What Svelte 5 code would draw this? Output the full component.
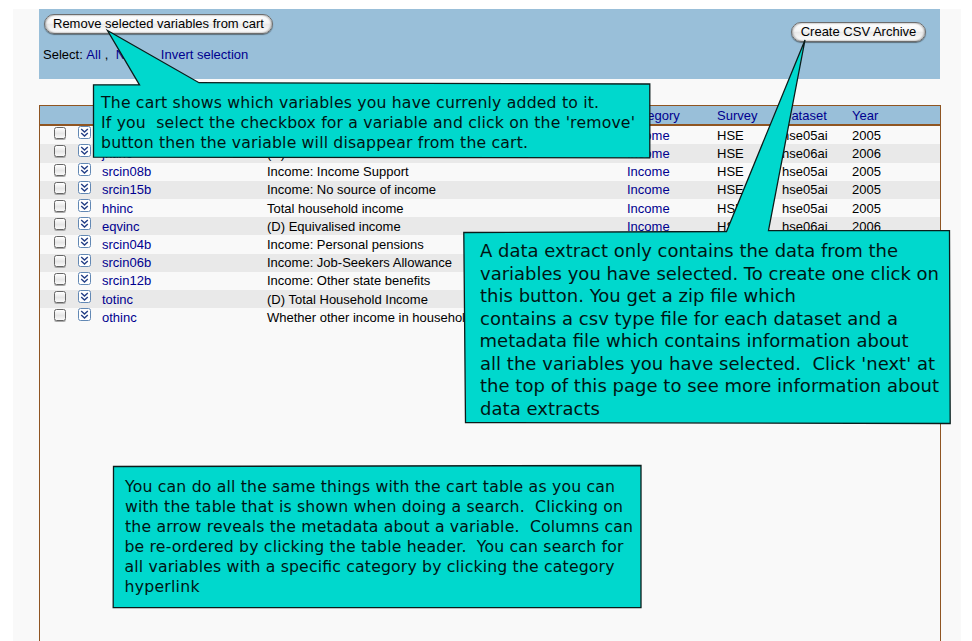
<script>
  const rows = [
    ['', '', 'Income', 'HSE', 'hse05ai', '2005'],
    ['jntinc', '(D) Joint income', 'Income', 'HSE', 'hse06ai', '2006'],
    ['srcin08b', 'Income: Income Support', 'Income', 'HSE', 'hse05ai', '2005'],
    ['srcin15b', 'Income: No source of income', 'Income', 'HSE', 'hse05ai', '2005'],
    ['hhinc', 'Total household income', 'Income', 'HSE', 'hse05ai', '2005'],
    ['eqvinc', '(D) Equivalised income', 'Income', 'HSE', 'hse06ai', '2006'],
    ['srcin04b', 'Income: Personal pensions'],
    ['srcin06b', 'Income: Job-Seekers Allowance'],
    ['srcin12b', 'Income: Other state benefits'],
    ['totinc', '(D) Total Household Income'],
    ['othinc', 'Whether other income in household']
  ];

  // Each line: text, x, baseline, width
  const callouts = [
    {
      size: 15.7,
      shape: '107.5,30.5 199,82.7 649.8,84 649.8,157.8 93.5,157.2 93.5,84.8 139.5,84.8',
      lines: [
        ['The cart shows which variables you have currenly added to it.', 101, 108, 498],
        ['If you  select the checkbox for a variable and click on the \'remove\'', 101, 128, 534],
        ['button then the variable will disappear from the cart.', 101, 148, 427]
      ]
    },
    {
      size: 18,
      shape: '805,40 768.5,230.5 949.5,230.7 950.2,423.5 465.5,422.5 463.8,232.5 726.5,231.5',
      lines: [
        ['A data extract only contains the data from the', 480, 257, 418],
        ['variables you have selected. To create one click on', 480, 280, 459],
        ['this button. You get a zip file which', 480, 302, 316],
        ['contains a csv type file for each dataset and a', 480, 325, 418],
        ['metadata file which contains information about', 479.5, 347, 429],
        ['all the variables you have selected.  Click \'next\' at', 480, 370, 455],
        ['the top of this page to see more information about', 480, 392, 459],
        ['data extracts', 480, 415, 120]
      ]
    },
    {
      size: 15.7,
      shape: '113.5,466.5 641,465.5 641,607.7 113.2,607.7',
      lines: [
        ['You can do all the same things with the cart table as you can', 125, 492, 490],
        ['with the table that is shown when doing a search.  Clicking on', 125, 512, 498],
        ['the arrow reveals the metadata about a variable.  Columns can', 125, 532, 508],
        ['be re-ordered by clicking the table header.  You can search for', 124.5, 552, 499],
        ['all variables with a specific category by clicking the category', 124.5, 572, 490],
        ['hyperlink', 124.5, 592, 75]
      ]
    }
  ];
</script>

<div class="page">
  <div class="panel">
    <header>
      <div class="left">
        <button>Remove selected variables from cart</button>
        <p class="select">Select: <a href="#all">All</a><span class="c1">,</span><a class="none" href="#none">None</a><span class="c2">,</span><a href="#invert">Invert selection</a></p>
      </div>
      <button class="csv">Create CSV Archive</button>
    </header>

    <section class="table">
      <div class="head grid">
        <span></span><span></span><span></span><span></span><a href="#c">Category</a><a href="#s">Survey</a><a href="#ds">Dataset</a><a href="#y">Year</a>
      </div>
      {#each rows as [name, label, category, survey, dataset, year]}
        <div class="row grid">
          <i class="check"></i>
          <svg class="arrow" width="13" height="14" viewBox="0 0 13 14">
            <rect x=".5" y=".5" width="12" height="12" rx="2" fill="#fff" stroke="#6288b4" />
            <path d="M3.2 3 6.5 6 9.8 3M3.2 7 6.5 10 9.8 7" fill="none" stroke="#243f86" stroke-width="1.4" />
          </svg>
          <a href="#v">{name}</a><span>{label}</span>
          {#if category}
            <a href="#income">{category}</a><span>{survey}</span><span>{dataset}</span><span>{year}</span>
          {/if}
        </div>
      {/each}
    </section>
  </div>

  <svg class="notes" width="972" height="641" viewBox="0 0 972 641">
    {#each callouts as c}
      <polygon points={c.shape} fill="#00d8cd" stroke="#0b1c1b" stroke-width="1.3" />
      {#each c.lines as [text, x, y, w]}
        <text {x} {y} font-size={c.size} textLength={w}>{text}</text>
      {/each}
    {/each}
  </svg>
</div>

<style>
  :global(body) { background: #fff; overflow: hidden; }
  .page {
    position: relative;
    box-sizing: border-box;
    width: 972px;
    height: 641px;
    padding: 9px 11px 0 13px;
    overflow: hidden;
    font: 13px/18px "Liberation Sans", Arial, sans-serif;
    color: #000;
  }
  .panel {
    box-sizing: border-box;
    height: 632px;
    padding: 0 20px 0 26px;
    background: #f9f9f9;
    display: flex;
    flex-direction: column;
  }
  a { color: #00008f; text-decoration: none; }
  header {
    box-sizing: border-box;
    width: 901px;
    height: 70px;
    padding: 5px 14px 0 5px;
    display: flex;
    justify-content: space-between;
    align-items: flex-start;
    background: #99bfd9;
  }
  button {
    display: block;
    box-sizing: border-box;
    width: 229px;
    height: 20px;
    padding: 0 0 1px;
    border: 1px solid #6d6d6d;
    border-radius: 10px;
    background: linear-gradient(#fff, #f5f5f5 45%, #e9e9e9 52%, #fff);
    box-shadow: 0 1px 1px #5b6f7c, inset 1px 0 2px #aaa, inset -1px 0 2px #aaa;
    font: 13px/17px "Liberation Sans", Arial, sans-serif;
    white-space: nowrap;
    color: #000;
  }
  .csv { width: 135px; margin-top: 8px; }
  .select { margin: 12px 0 0 -1px; display: flex; white-space: pre; }
  .c1 { margin-left: 4px; width: 11px; }
  .none { width: 34px; }
  .c2 { width: 11px; }
  .table {
    box-sizing: border-box;
    width: 902px;
    flex: 1;
    margin-top: 26px;
    border: 1px solid #8f5522;
    border-bottom: 0;
  }
  .grid {
    display: grid;
    grid-template-columns: 24px 24px 165px 360px 90px 65px 70px 1fr;
    padding-left: 14px;
    white-space: nowrap;
  }
  .head {
    height: 18px;
    line-height: 20px;
    background: #99bfd9;
    border-bottom: 2px solid #8f5522;
    margin-bottom: .2px;
  }
  .row { height: 18.2px; line-height: 18.2px; }
  .row > a, .row > span { padding-top: .7px; }
  .row:nth-child(odd) { background: #e9e9e9; }
  .check {
    box-sizing: border-box;
    width: 12px;
    height: 12px;
    margin-top: 1px;
    border: 1px solid #666;
    border-radius: 2.5px;
    background: linear-gradient(#fff, #e6e6e6 55%, #fafafa);
    box-shadow: 0 1px 0 #aaa;
  }
  .arrow { display: block; }
  .notes { position: absolute; left: 0; top: 0; }
  .notes text { font-family: "DejaVu Sans", sans-serif; fill: #001514; white-space: pre; }
</style>
